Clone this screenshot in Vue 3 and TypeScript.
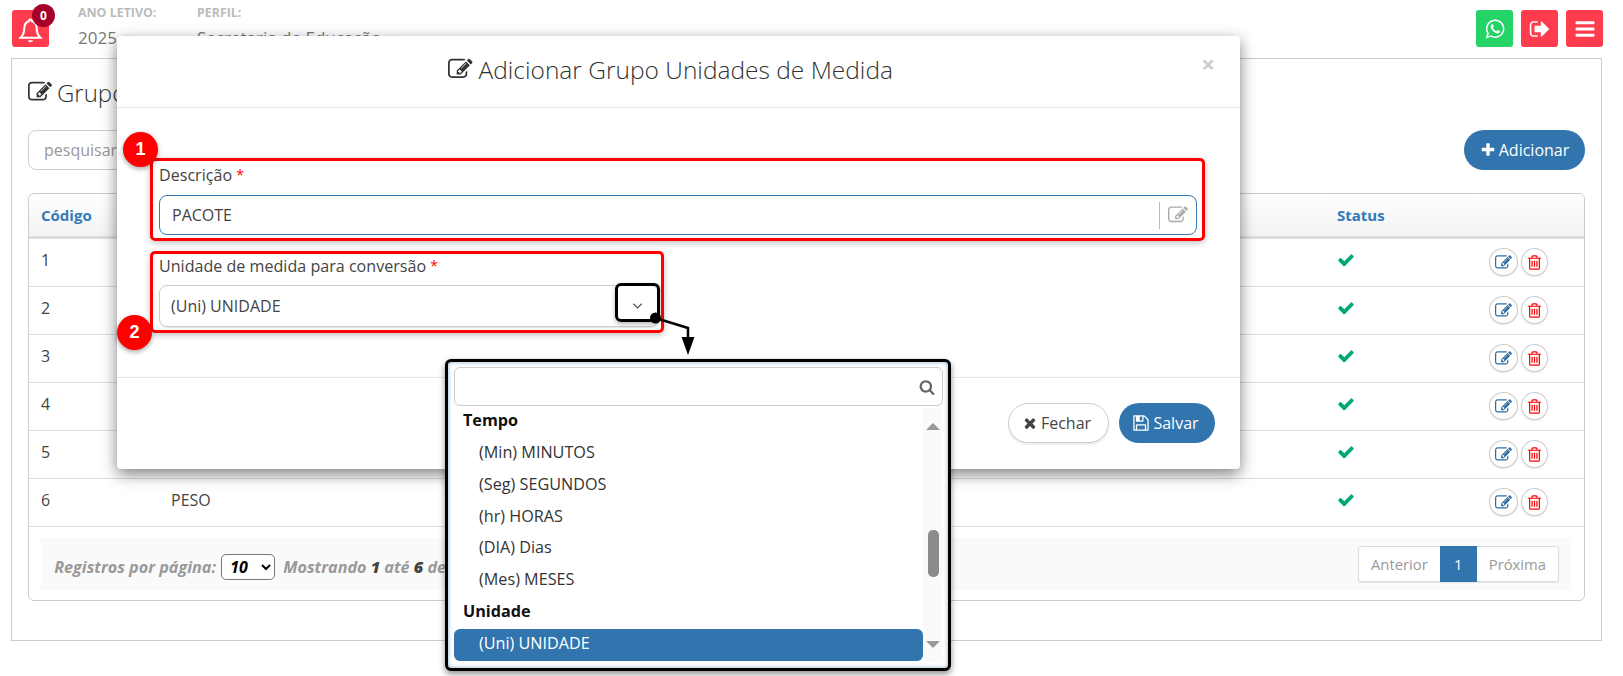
<script setup lang="ts">
// icones no formato 1792 x 1792
const icons = {
  edit: 'M888 1184l116-116-152-152-116 116v56h96v96h56zm440-720q-16-16-33 1l-350 350q-17 17-1 33t33-1l350-350q17-17 1-33zm80 594v190q0 119-84.500 203.500t-203.500 84.500h-832q-119 0-203.500-84.500t-84.500-203.500v-832q0-119 84.500-203.500t203.500-84.500h832q63 0 117 25 15 7 18 23 3 17-9 29l-49 49q-14 14-32 8-23-6-45-6h-832q-66 0-113 47t-47 113v832q0 66 47 113t113 47h832q66 0 113-47t47-113v-126q0-13 9-22l64-64q15-15 35-7t20 29zm-96-738l288 288-672 672h-288v-288zm444 132l-92 92-288-288 92-92q28-28 68-28t68 28l152 152q28 28 28 68t-28 68z',
  check: 'M1671 566q0 40-28 68l-724 724-136 136q-28 28-68 28t-68-28l-136-136-362-362q-28-28-28-68t28-68l136-136q28-28 68-28t68 28l294 295 656-657q28-28 68-28t68 28l136 136q28 28 28 68z',
  plus: 'M1600 736v192q0 40-28 68t-68 28h-416v416q0 40-28 68t-68 28h-192q-40 0-68-28t-28-68v-416h-416q-40 0-68-28t-28-68v-192q0-40 28-68t68-28h416v-416q0-40 28-68t68-28h192q40 0 68 28t28 68v416h416q40 0 68 28t28 68z',
  times: 'M1490 1322q0 40-28 68l-136 136q-28 28-68 28t-68-28l-294-294-294 294q-28 28-68 28t-68-28l-136-136q-28-28-28-68t28-68l294-294-294-294q-28-28-28-68t28-68l136-136q28-28 68-28t68 28l294 294 294-294q28-28 68-28t68 28l136 136q28 28 28 68t-28 68l-294 294 294 294q28 28 28 68z',
  save: 'M512 1536h768v-384h-768v384zm896 0h128v-896q0-14-10-38.500t-20-34.500l-281-281q-10-10-34-20t-39-10v416q0 40-28 68t-68 28h-576q-40 0-68-28t-28-68v-416h-128v1280h128v-416q0-40 28-68t68-28h832q40 0 68 28t28 68v416zm-384-928v-320q0-13-9.500-22.500t-22.500-9.500h-192q-13 0-22.500 9.500t-9.500 22.500v320q0 13 9.500 22.500t22.500 9.500h192q13 0 22.500-9.500t9.500-22.500zm640 32v928q0 40-28 68t-68 28h-1344q-40 0-68-28t-28-68v-1344q0-40 28-68t68-28h928q40 0 88 20t76 48l280 280q28 28 48 76t20 88z',
  trash: 'M704 736v576q0 14-9 23t-23 9h-64q-14 0-23-9t-9-23v-576q0-14 9-23t23-9h64q14 0 23 9t9 23zm256 0v576q0 14-9 23t-23 9h-64q-14 0-23-9t-9-23v-576q0-14 9-23t23-9h64q14 0 23 9t9 23zm256 0v576q0 14-9 23t-23 9h-64q-14 0-23-9t-9-23v-576q0-14 9-23t23-9h64q14 0 23 9t9 23zm128 724v-948h-896v948q0 22 7 40.500t14.500 27 10.500 8.500h832q3 0 10.500-8.500t14.500-27 7-40.500zm-672-1076h448l-48-117q-7-9-17-11h-317q-10 2-17 11zm928 32v64q0 14-9 23t-23 9h-96v948q0 83-47 143.500t-113 60.500h-832q-66 0-113-58.500t-47-141.500v-952h-96q-14 0-23-9t-9-23v-64q0-14 9-23t23-9h309l70-167q15-37 54-63t79-26h320q40 0 79 26t54 63l70 167h309q14 0 23 9t9 23z',
  search: 'M1216 832q0-185-131.500-316.500t-316.500-131.500-316.500 131.500-131.500 316.500 131.500 316.500 316.500 131.500 316.500-131.500 131.500-316.500zm512 832q0 52-38 90t-90 38q-54 0-90-38l-343-342q-179 124-399 124-143 0-273.500-55.500t-225-150-150-225-55.500-273.500 55.500-273.500 150-225 225-150 273.500-55.500 273.500 55.500 225 150 150 225 55.500 273.500q0 220-124 399l343 343q37 37 37 90z',
  signOut: 'M704 1440q0 4 1 20t.5 26.500-3 23.500-10 19.500-20.500 6.500h-320q-119 0-203.500-84.500t-84.500-203.500v-704q0-119 84.500-203.500t203.500-84.500h320q13 0 22.500 9.500t9.500 22.500q0 4 1 20t.5 26.500-3 23.500-10 19.500-20.500 6.500h-320q-66 0-113 47t-47 113v704q0 66 47 113t113 47h312l11.500 1 11.500 3 8 5.500 7 9 2 13.500zm928-544q0 26-19 45l-544 544q-19 19-45 19t-45-19-19-45v-288h-448q-26 0-45-19t-19-45v-384q0-26 19-45t45-19h448v-288q0-26 19-45t45-19 45 19l544 544q19 19 19 45z',
  bars: 'M1664 1344v128q0 26-19 45t-45 19h-1408q-26 0-45-19t-19-45v-128q0-26 19-45t45-19h1408q26 0 45 19t19 45zm0-512v128q0 26-19 45t-45 19h-1408q-26 0-45-19t-19-45v-128q0-26 19-45t45-19h1408q26 0 45 19t19 45zm0-512v128q0 26-19 45t-45 19h-1408q-26 0-45-19t-19-45v-128q0-26 19-45t45-19h1408q26 0 45 19t19 45z',
  whatsapp: 'M1113 974q13 0 97.500 44t89.500 53q2 5 2 15 0 33-17 76-16 39-71 65.500t-102 26.500q-57 0-190-62-98-45-170-118t-148-185q-72-107-71-194v-8q3-91 74-158 24-22 52-22 6 0 18 1.500t19 1.500q19 0 26.500 6.500t15.500 27.500q8 20 33 88t25 75q0 21-34.500 57.500t-34.500 46.500q0 7 5 15 34 73 102 137 56 53 151 101 12 7 22 7 15 0 54-48.500t52-48.500zm-203 530q127 0 243.500-50t200.500-134 134-200.500 50-243.500-50-243.500-134-200.500-200.500-134-243.500-50-243.500 50-200.500 134-134 200.500-50 243.500q0 203 120 368l-79 233 242-77q158 104 345 104zm0-1382q153 0 292.500 60t240.500 161 161 240.500 60 292.500-60 292.500-161 240.500-240.500 161-292.500 60q-195 0-365-94l-417 134 136-405q-108-178-108-389 0-153 60-292.500t161-240.500 240.500-161 292.500-60z'
}

// descrições das linhas 1 a 5 ficam atrás do modal
const rows = [
  { id: 1, nome: '' },
  { id: 2, nome: '' },
  { id: 3, nome: '' },
  { id: 4, nome: '' },
  { id: 5, nome: '' },
  { id: 6, nome: 'PESO' }
]

const tempo = ['(Min) MINUTOS', '(Seg) SEGUNDOS', '(hr) HORAS', '(DIA) Dias', '(Mes) MESES']
</script>

<template>
  <div class="page">
    <!-- TOPO -->
    <header class="topbar">
      <button class="square red bell">
        <svg class="bell-icon" viewBox="0 0 24 26">
          <path d="M12 2.500c-1 0-1.500.7-1.500 1.500C7 5 6 7.500 6 11c0 4-1 6.500-3.500 9h19C19 17.500 18 15 18 11c0-3.500-1-6-4.500-7 0-.8-.5-1.500-1.500-1.500z" />
          <path d="M9.500 22.500a2.600 2.600 0 0 0 5 0z" fill="#fff" stroke="none" />
        </svg>
        <span class="badge">0</span>
      </button>
      <div class="info ano">
        <small>ANO LETIVO:</small>
        <span>2025<svg class="carets" viewBox="0 0 20 8"><path d="M1 1l3 4 3-4M11 1l3 4 3-4" /></svg></span>
      </div>
      <div class="info">
        <small>PERFIL:</small>
        <span>Secretaria de Educação<svg class="carets" viewBox="0 0 20 8"><path d="M1 1l3 4 3-4M11 1l3 4 3-4" /></svg></span>
      </div>
      <div class="top-actions">
        <button class="square green"><svg class="fa s22" viewBox="0 0 1792 1792"><path :d="icons.whatsapp" /></svg></button>
        <button class="square red"><svg class="fa s22" viewBox="0 0 1792 1792"><path :d="icons.signOut" /></svg></button>
        <button class="square red"><svg class="fa s22" viewBox="0 0 1792 1792"><path :d="icons.bars" /></svg></button>
      </div>
    </header>

    <!-- PAINEL -->
    <section class="panel">
      <h2 class="panel-title">
        <svg class="fa" viewBox="0 0 1792 1792"><path :d="icons.edit" /></svg>
        Grupo Unidades de Medida
      </h2>

      <div class="toolbar">
        <input class="search" placeholder="pesquisar" />
        <button class="btn-primary add">
          <svg class="fa s16" viewBox="0 0 1792 1792"><path :d="icons.plus" /></svg>
          Adicionar
        </button>
      </div>

      <div class="table-wrap">
        <table>
          <colgroup>
            <col style="width: 130px" />
            <col />
            <col style="width: 152px" />
            <col style="width: 107px" />
          </colgroup>
          <thead>
            <tr>
              <th>Código</th>
              <th></th>
              <th>Status</th>
              <th></th>
            </tr>
          </thead>
          <tbody>
            <tr v-for="row in rows" :key="row.id">
              <td>{{ row.id }}</td>
              <td>{{ row.nome }}</td>
              <td><svg class="fa check" viewBox="0 0 1792 1792"><path :d="icons.check" /></svg></td>
              <td>
                <div class="row-actions">
                  <button class="round edit"><svg class="fa" viewBox="0 0 1792 1792"><path :d="icons.edit" /></svg></button>
                  <button class="round del"><svg class="fa" viewBox="0 0 1792 1792"><path :d="icons.trash" /></svg></button>
                </div>
              </td>
            </tr>
          </tbody>
        </table>

        <div class="table-footer">
          <div class="per-page">
            Registros por página:
            <select>
              <option>10</option>
              <option>25</option>
            </select>
            <span>Mostrando <b>1</b> até <b>6</b> de</span>
          </div>
          <div class="pagination">
            <a>Anterior</a>
            <a class="active">1</a>
            <a>Próxima</a>
          </div>
        </div>
      </div>
    </section>

    <!-- MODAL -->
    <div class="modal">
      <div class="modal-header">
        <h3>
          <svg class="fa" viewBox="0 0 1792 1792"><path :d="icons.edit" /></svg>
          Adicionar Grupo Unidades de Medida
        </h3>
        <span class="close">×</span>
      </div>

      <div class="modal-body">
        <div class="field-box">
          <label>Descrição <i>*</i></label>
          <div class="input">
            <span>PACOTE</span>
            <div class="addon"><svg class="fa" viewBox="0 0 1792 1792"><path :d="icons.edit" /></svg></div>
          </div>
        </div>

        <div class="field-box second">
          <label>Unidade de medida para conversão <i>*</i></label>
          <div class="select">
            <span>(Uni) UNIDADE</span>
            <div class="callout">
              <svg class="chevron" viewBox="0 0 12 8"><path d="M1.500 1.500 6 6l4.500-4.500" /></svg>
            </div>
          </div>
        </div>
      </div>

      <div class="modal-footer">
        <button class="btn-default">
          <svg class="fa s16" viewBox="0 0 1792 1792"><path :d="icons.times" /></svg>
          Fechar
        </button>
        <button class="btn-primary save">
          <svg class="fa s18" viewBox="0 0 1792 1792"><path :d="icons.save" /></svg>
          Salvar
        </button>
      </div>
    </div>

    <!-- MARCADORES -->
    <span class="marker m1">1</span>
    <span class="marker m2">2</span>

    <svg class="pointer" viewBox="0 0 60 55">
      <circle cx="15.500" cy="13" r="5.500" />
      <path class="line" d="M15.500 13 48 23v12" />
      <path d="M41.500 32h13L48 50z" />
    </svg>

    <!-- DROPDOWN -->
    <div class="dropdown">
      <div class="dd-search">
        <svg class="fa" viewBox="0 0 1792 1792"><path :d="icons.search" /></svg>
      </div>
      <div class="dd-body">
        <ul class="dd-list">
          <li class="group first">Tempo</li>
          <li v-for="item in tempo" :key="item" class="opt">{{ item }}</li>
          <li class="group">Unidade</li>
          <li class="opt selected">(Uni) UNIDADE</li>
        </ul>
        <div class="dd-scroll">
          <span class="arrow up"></span>
          <span class="thumb"></span>
          <span class="arrow down"></span>
        </div>
      </div>
    </div>
  </div>
</template>

<style scoped>
.page {
  position: relative;
  width: 1623px;
  height: 676px;
  overflow: hidden;
  background: #fff;
  font-family: "Open Sans", sans-serif;
  font-size: 16px;
  color: #444;
}

* {
  box-sizing: border-box;
}

button {
  font-family: inherit;
  cursor: pointer;
}

.fa {
  display: inline-block;
  width: 1em;
  height: 1em;
  fill: currentColor;
  flex: none;
}

.s16 { width: 16px; height: 16px; }
.s18 { width: 18px; height: 18px; }
.s22 { width: 22px; height: 22px; }

/* topo */
.topbar {
  display: flex;
  align-items: flex-start;
  height: 58px;
  padding: 10px 20px 0 12px;
}

.square {
  display: flex;
  align-items: center;
  justify-content: center;
  width: 37px;
  height: 37px;
  padding: 0;
  border: none;
  border-radius: 3px;
  color: #fff;
}

.red { background: #ff3b4e; }
.green { background: #25d366; }

.bell {
  position: relative;
  margin-right: 29px;
}

.bell-icon {
  width: 25px;
  height: 27px;
  margin-top: 3px;
  fill: none;
  stroke: #fff;
  stroke-width: 2;
}

.badge {
  position: absolute;
  top: -6px;
  right: -6px;
  width: 23px;
  height: 23px;
  border-radius: 50%;
  background: #a5002a;
  color: #fff;
  font-size: 12px;
  font-weight: 700;
  line-height: 23px;
  text-align: center;
}

.info {
  display: flex;
  flex-direction: column;
  margin-top: -5px;
}

.ano {
  width: 119px;
}

.info small {
  font-size: 12.400px;
  font-weight: 700;
  line-height: 16px;
  color: #bbb;
}

.info span {
  margin-top: 5px;
  font-size: 17px;
  line-height: 23px;
  color: #777;
}

.carets {
  width: 14px;
  height: 6px;
  margin-left: 6px;
  vertical-align: 3px;
  fill: none;
  stroke: #888;
  stroke-width: 1.500;
}

.top-actions {
  display: flex;
  gap: 8px;
  margin-left: auto;
}

/* painel */
.panel {
  height: 583px;
  margin: 0 21px 0 11px;
  padding: 0 16px;
  border: 1px solid #ccc;
}

.panel-title {
  display: flex;
  align-items: center;
  gap: 5px;
  height: 71px;
  margin: 0;
  padding-bottom: 5px;
  font-size: 24px;
  font-weight: 300;
  color: #333;
}

.toolbar {
  display: flex;
  justify-content: space-between;
  height: 40px;
}

.search {
  width: 300px;
  height: 40px;
  padding: 0 15px;
  border: 1px solid #ccc;
  border-radius: 8px;
  font-family: inherit;
  font-size: 16px;
}

.search::placeholder {
  color: #999;
}

.btn-primary {
  display: flex;
  align-items: center;
  justify-content: center;
  gap: 3px;
  height: 40px;
  border: none;
  border-radius: 20px;
  background: #3174ae;
  color: #fff;
  font-size: 16px;
}

.add {
  width: 121px;
}

.table-wrap {
  height: 408px;
  margin-top: 23px;
  border: 1px solid #ccc;
  border-radius: 6px;
}

table {
  width: 100%;
  table-layout: fixed;
  border-collapse: separate;
  border-spacing: 0;
}

th {
  height: 45px;
  padding: 0 12px;
  border-bottom: 3px solid #ddd;
  border-radius: 6px 6px 0 0;
  background: linear-gradient(#fff, #f3f3f3);
  color: #337ab7;
  font-size: 15px;
  font-weight: 700;
  text-align: left;
}

td {
  height: 48px;
  padding: 0 12px 5px;
  border-bottom: 1px solid #ddd;
  font-size: 16px;
  color: #444;
}

.check {
  width: 18px;
  height: 18px;
  margin-top: 4px;
  color: #04a777;
}

.row-actions {
  display: flex;
  gap: 3px;
  margin-top: 4px;
}

.round {
  display: flex;
  align-items: center;
  justify-content: center;
  width: 27px;
  height: 28px;
  padding: 0;
  border: 1px solid #ccc;
  border-radius: 50%;
  background: #fff;
  box-shadow: 0 1px 1px rgba(0, 0, 0, 0.1);
}

.round .fa {
  width: 17px;
  height: 17px;
}

.round.edit {
  width: 29px;
  color: #2f6ca3;
}

.del { color: #f00; }

.table-footer {
  display: flex;
  align-items: center;
  justify-content: space-between;
  height: 52px;
  margin: 11px 13px 0 12px;
  padding: 0 12px 0 9px;
  background: #fafafa;
}

.per-page {
  display: flex;
  align-items: center;
  gap: 2px;
  margin-top: 6px;
  font-size: 16.200px;
  font-style: italic;
  font-weight: 700;
  color: #999;
  white-space: pre;
}

.per-page b {
  color: #444;
}

.per-page select {
  width: 54px;
  height: 26px;
  margin-right: 6px;
  margin-left: -1px;
  padding: 0 0 0 4px;
  border: 1px solid #777;
  border-radius: 5px;
  background: #fff;
  color: #000;
  font-family: inherit;
  font-size: 16px;
  font-style: italic;
  font-weight: 700;
}

.pagination {
  display: flex;
  height: 36px;
  border: 1px solid #ddd;
  border-radius: 3px;
  background: #fff;
  box-shadow: 0 1px 1px rgba(0, 0, 0, 0.08);
  font-size: 14.800px;
  line-height: 34px;
  color: #999;
}

.pagination a {
  padding: 0 12px;
}

.pagination .active {
  width: 37px;
  margin: -1px 0;
  padding: 1px 0 0;
  background: #3174ae;
  color: #fff;
  text-align: center;
}

/* modal */
.modal {
  position: absolute;
  top: 36px;
  left: 117px;
  width: 1123px;
  height: 433px;
  border-radius: 4px;
  background: #fff;
  box-shadow: 0 5px 15px rgba(0, 0, 0, 0.5);
}

.modal-header {
  position: relative;
  display: flex;
  align-items: center;
  justify-content: center;
  height: 72px;
  padding: 0 16px 5px 0;
  border-bottom: 1px solid #e5e5e5;
}

.modal-header h3 {
  display: flex;
  align-items: center;
  gap: 6px;
  margin: 0;
  font-size: 24.500px;
  font-weight: 300;
  color: #333;
}

.close {
  position: absolute;
  top: 11px;
  right: 25px;
  font-size: 24px;
  font-weight: 700;
  color: #ccc;
}

.modal-body {
  height: 270px;
  padding: 50px 35px 0 33px;
  border-bottom: 1px solid #e5e5e5;
}

.field-box {
  height: 83px;
  padding: 2px 5px 0 6px;
  border: 3px solid #f00;
  border-radius: 5px;
  box-shadow: 0 2px 6px rgba(0, 0, 0, 0.25);
}

.field-box label {
  display: block;
  height: 32px;
  line-height: 24px;
  font-size: 16.100px;
  color: #444;
}

.field-box i {
  color: #f00;
  font-style: normal;
  font-size: 14px;
  vertical-align: 1px;
}

.input {
  display: flex;
  align-items: center;
  justify-content: space-between;
  height: 40px;
  padding-left: 12px;
  border: 1px solid #337ab7;
  border-radius: 8px;
}

.addon {
  display: flex;
  align-items: center;
  justify-content: center;
  width: 37px;
  height: 27px;
  border-left: 1px solid #bbb;
  color: #aaa;
}

.addon .fa {
  width: 20px;
  height: 20px;
}

.second {
  width: 514px;
  height: 82px;
  margin-top: 10px;
  padding-right: 2px;
  padding-top: 0;
}

.second label {
  height: 31px;
  line-height: 23px;
}

.select {
  position: relative;
  display: flex;
  align-items: center;
  height: 42px;
  padding-left: 11px;
  border: 1px solid #ccc;
  border-radius: 8px;
  box-shadow: 0 1px 1px rgba(0, 0, 0, 0.1);
}

.callout {
  position: absolute;
  top: -3px;
  right: -2px;
  display: flex;
  align-items: center;
  justify-content: center;
  width: 45px;
  height: 39px;
  padding-top: 6px;
  border: 3.500px solid #000;
  border-radius: 6px;
  box-shadow: 0 2px 4px rgba(0, 0, 0, 0.3);
}

.chevron {
  width: 11px;
  height: 8px;
  fill: none;
  stroke: #555;
  stroke-width: 1.400;
}

.modal-footer {
  display: flex;
  justify-content: flex-end;
  gap: 10px;
  padding: 25px 25px 0 0;
}

.btn-default {
  display: flex;
  align-items: center;
  justify-content: center;
  gap: 3px;
  width: 101px;
  height: 40px;
  padding: 0 4px 0 0;
  border: 1px solid #ccc;
  border-radius: 20px;
  background: #fff;
  box-shadow: 0 2px 2px rgba(0, 0, 0, 0.08);
  color: #444;
  font-size: 16px;
}

.save {
  width: 96px;
  padding: 0 3px 0 0;
}

/* marcadores */
.marker {
  position: absolute;
  display: flex;
  align-items: center;
  justify-content: center;
  width: 35px;
  height: 35px;
  border-radius: 50%;
  background: #f00;
  box-shadow: 0 2px 5px rgba(0, 0, 0, 0.35);
  color: #fff;
  font-family: "Liberation Sans", sans-serif;
  font-size: 18px;
  font-weight: 700;
}

.m1 { top: 132px; left: 123px; }
.m2 { top: 315px; left: 117px; }

.pointer {
  position: absolute;
  top: 305px;
  left: 640px;
  width: 60px;
  height: 55px;
  fill: #000;
}

.pointer .line {
  fill: none;
  stroke: #000;
  stroke-width: 2.500;
}

/* dropdown */
.dropdown {
  position: absolute;
  top: 359px;
  left: 445px;
  width: 506px;
  height: 312px;
  padding: 5px 5px 0 6px;
  border: 3px solid #000;
  border-radius: 6px;
  background: #fff;
  box-shadow: 0 3px 6px rgba(0, 0, 0, 0.45), inset 0 0 4px rgba(49, 116, 174, 0.6);
  color: #333;
}

.dd-search {
  display: flex;
  align-items: center;
  justify-content: flex-end;
  height: 39px;
  padding-right: 7px;
  border: 1px solid #ccc;
  border-radius: 6px;
  color: #666;
}

.dd-search .fa {
  width: 16px;
  height: 16px;
}

.dd-body {
  display: flex;
  height: 254px;
  margin-top: 2px;
}

.dd-list {
  flex: 1;
  margin: 0;
  padding: 0;
  list-style: none;
  font-size: 16.200px;
}

.group {
  height: 32px;
  padding-left: 9px;
  line-height: 32px;
  font-weight: 700;
  color: #111;
}

.group.first {
  height: 28px;
  line-height: 24px;
}

.opt {
  height: 31.800px;
  padding-left: 25px;
  line-height: 33px;
}

.selected {
  height: 32px;
  margin-top: 2px;
  border-radius: 6px;
  background: #3174ae;
  color: #fff;
  line-height: 29px;
}

.dd-scroll {
  display: flex;
  flex-direction: column;
  align-items: center;
  width: 20px;
  background: #fafafa;
}

.thumb {
  width: 11px;
  height: 47px;
  margin-top: 100px;
  border-radius: 5px;
  background: #8b8b8b;
}

.arrow {
  width: 0;
  height: 0;
  border-left: 7px solid transparent;
  border-right: 7px solid transparent;
}

.up {
  margin-top: 15px;
  border-bottom: 7px solid #999;
}

.down {
  margin-top: 64px;
  border-top: 7px solid #999;
}
</style>
